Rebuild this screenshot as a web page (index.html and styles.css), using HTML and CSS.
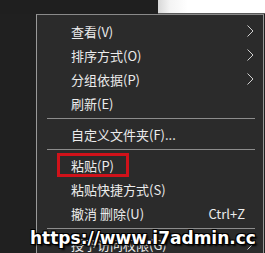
FILE: index.html
```html
<!DOCTYPE html>
<html lang="zh-CN">
<head>
<meta charset="utf-8">
<link rel="stylesheet" href="styles.css">
</head>
<body>
<div class="screen">
  <div class="topbar">
    <div class="topbar-dark"></div>
    <div class="topbar-window"></div>
  </div>
  <div class="menu">
    <div class="item"><span class="label">查看(V)</span><svg class="chev" viewBox="0 0 7 12" width="7" height="12"><path d="M0.5 0.5 L6 6 L0.5 11.5" fill="none" stroke="#cfcfcf" stroke-width="1"/></svg></div>
    <div class="item"><span class="label">排序方式(O)</span><svg class="chev" viewBox="0 0 7 12" width="7" height="12"><path d="M0.5 0.5 L6 6 L0.5 11.5" fill="none" stroke="#cfcfcf" stroke-width="1"/></svg></div>
    <div class="item"><span class="label">分组依据(P)</span><svg class="chev" viewBox="0 0 7 12" width="7" height="12"><path d="M0.5 0.5 L6 6 L0.5 11.5" fill="none" stroke="#cfcfcf" stroke-width="1"/></svg></div>
    <div class="item"><span class="label">刷新(E)</span></div>
    <div class="sep"></div>
    <div class="item"><span class="label">自定义文件夹(F)...</span></div>
    <div class="sep"></div>
    <div class="item marked"><span class="label">粘贴(P)</span><span class="mark"></span></div>
    <div class="item"><span class="label">粘贴快捷方式(S)</span></div>
    <div class="item"><span class="label">撤消 删除(U)</span><span class="shortcut">Ctrl+Z</span></div>
    <div class="sep"></div>
    <div class="item"><span class="label">授予访问权限(G)</span><svg class="chev" viewBox="0 0 7 12" width="7" height="12"><path d="M0.5 0.5 L6 6 L0.5 11.5" fill="none" stroke="#cfcfcf" stroke-width="1"/></svg></div>
  </div>
  <div class="watermark">https://www.i7admin.cc</div>
</div>
</body>
</html>
```

FILE: styles.css
```css
* { box-sizing: border-box; }
html, body {
  margin: 0;
  padding: 0;
  width: 265px;
  height: 253px;
  overflow: hidden;
  background: #202020;
}
.screen {
  position: relative;
  width: 265px;
  height: 253px;
  overflow: hidden;
  font-family: "Noto Sans CJK SC", "Noto Sans", sans-serif;
}
.topbar {
  display: flex;
  height: 14px;
}
.topbar-dark {
  width: 158px;
  background: #1f1f1f;
}
.topbar-window {
  flex: 1;
  background: linear-gradient(to right, #d8d8d8 0px, #f4f4f4 12px, #ffffff 30px);
  border-bottom: 1px solid #5a5a5a;
}
.menu {
  margin-left: 36px;
  width: 228px;
  background: #2b2b2b;
  border: 1px solid #9a9a9a;
  border-top-color: #8a8a8a;
  padding-top: 4px;
}
.item {
  position: relative;
  display: flex;
  align-items: center;
  height: 24px;
  padding-left: 34px;
  padding-right: 9px;
  color: #ececec;
  font-size: 13px;
}
.label {
  flex: 1;
  white-space: nowrap;
}
.chev {
  display: block;
  flex: none;
}
.shortcut {
  margin-right: 9px;
  font-size: 13px;
}
.sep {
  height: 7px;
  padding: 3px 8px 0 10px;
}
.sep::before {
  content: "";
  display: block;
  height: 1px;
  background: #8c8c8c;
}
.mark {
  position: absolute;
  left: 20px;
  top: 0;
  width: 72px;
  height: 24px;
  border: 3px solid #d0121a;
}
.watermark {
  position: absolute;
  left: 30px;
  top: 228px;
  font-family: "DejaVu Sans", sans-serif;
  font-weight: bold;
  font-size: 17px;
  color: #ffffff;
  white-space: nowrap;
  text-shadow: 1px 1px 0 #000, -1px -1px 0 #000, 1px -1px 0 #000, -1px 1px 0 #000, 2px 2px 2px #000;
}
```
